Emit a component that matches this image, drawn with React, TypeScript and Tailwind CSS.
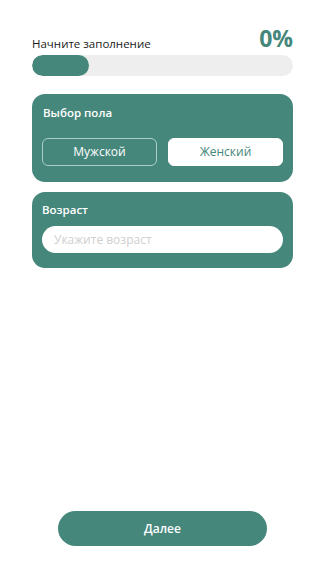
import { useState } from "react";

const TEAL = "#46877c";

export default function App() {
  const [gender, setGender] = useState<"m" | "f" | null>(null);
  const [age, setAge] = useState("");

  return (
    <div
      className="min-h-[576px] w-full bg-white flex flex-col pl-8 pr-[31px]"
      style={{ fontFamily: '"Open Sans", "Noto Sans", sans-serif' }}
    >
      {/* progress header */}
      <div className="pt-[27px] flex items-end justify-between">
        <span className="text-[11.5px] font-medium text-[#1a1a1a] leading-none pb-[1px]">
          Начните заполнение
        </span>
        <span className="text-[23px] font-bold leading-none text-[#46877c]">0%</span>
      </div>
      <div className="mt-[5px] h-[21px] w-full rounded-full bg-[#efeeef] overflow-hidden">
        <div className="h-full w-[57px] rounded-full bg-[#46877c]" />
      </div>

      {/* gender card */}
      <div className="mt-[18px] rounded-[13px] bg-[#46877c] px-[10px] pt-[11px] pb-[16px]">
        <div className="text-[11.5px] font-semibold text-white leading-[16px] pl-[1px]">Выбор пола</div>
        <div className="mt-[17px] grid grid-cols-2 gap-[11px]">
          <button
            onClick={() => setGender("m")}
            className={`h-[28px] rounded-[6px] border text-[12px] font-medium ${
              gender === "m"
                ? "bg-white text-[#46877c] border-white"
                : "border-[#a9cfc8] text-white bg-transparent"
            }`}
          >
            Мужской
          </button>
          <button
            onClick={() => setGender("f")}
            className={`h-[28px] rounded-[6px] border text-[12px] font-medium ${
              gender === "m"
                ? "border-[#a9cfc8] text-white bg-transparent"
                : "bg-white text-[#46877c] border-white"
            }`}
          >
            Женский
          </button>
        </div>
      </div>

      {/* age card */}
      <div className="mt-[10px] rounded-[13px] bg-[#46877c] px-[10px] pt-[10px] pb-[15px]">
        <div className="text-[11.5px] font-semibold text-white leading-[16px]">Возраст</div>
        <input
          value={age}
          onChange={(e) => setAge(e.target.value)}
          placeholder="Укажите возраст"
          className="mt-[8px] h-[27px] w-full rounded-full bg-white px-[12px] text-[12px] text-[#333] placeholder:text-[#cfcfcf] outline-none"
        />
      </div>

      {/* next */}
      <div className="mt-auto pb-[30px] flex justify-center">
        <button
          className="h-[35px] w-[209px] rounded-full text-white text-[12px] font-semibold"
          style={{ backgroundColor: TEAL }}
        >
          Далее
        </button>
      </div>
    </div>
  );
}
